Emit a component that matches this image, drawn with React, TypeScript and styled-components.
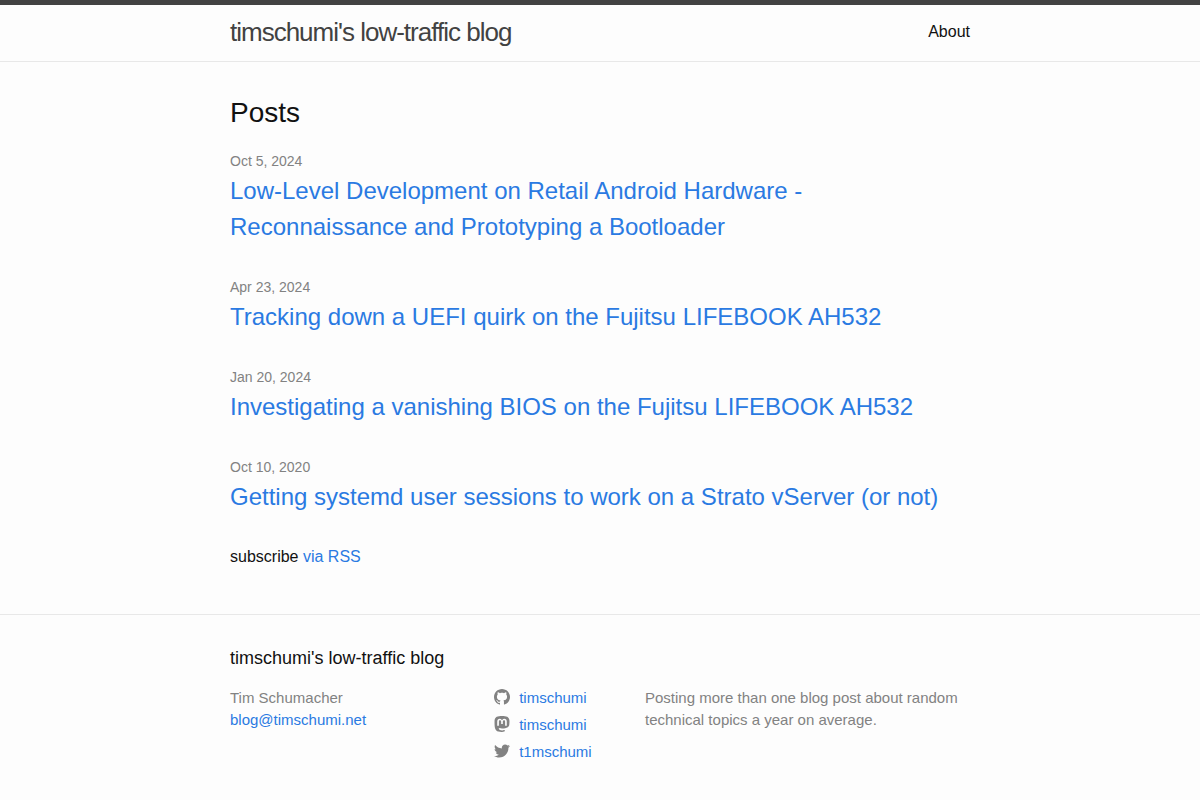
import React from "react";
import styled, { createGlobalStyle } from "styled-components";

const GlobalStyle = createGlobalStyle`
  * { box-sizing: border-box; }
  body {
    margin: 0;
    background: #fdfdfd;
    color: #111;
    font: 400 16px/24px "Liberation Sans", Arial, sans-serif;
  }
  h1, h2, h3, p, ul { margin: 0; padding: 0; font-weight: 400; }
  ul { list-style: none; }
`;

const Wrapper = styled.div`
  max-width: 800px;
  margin: 0 auto;
  padding: 0 30px;
`;

const Link = styled.a`
  color: #2a7ae2;
  text-decoration: none;
  &:hover { color: #111; text-decoration: underline; }
`;

const Header = styled.header`
  border-top: 5px solid #424242;
  border-bottom: 1px solid #e8e8e8;
`;

const HeaderRow = styled(Wrapper)`
  display: flex;
  justify-content: space-between;
  height: 56px;
  line-height: 54px;
`;

const SiteTitle = styled.a`
  color: #424242;
  font-size: 26px;
  letter-spacing: -1px;
  text-decoration: none;
`;

const NavLink = styled.a`
  color: #111;
  text-decoration: none;
`;

const Main = styled.main`
  padding: 30px 0;
`;

const ListHeading = styled.h2`
  margin-bottom: 15px;
  font-size: 28px;
  line-height: 42px;
`;

const Post = styled.li`
  margin-bottom: 30px;
`;

const PostDate = styled.time`
  display: block;
  color: #828282;
  font-size: 14px;
  line-height: 24px;
`;

const PostTitle = styled.h3`
  font-size: 24px;
  line-height: 36px;
`;

const Subscribe = styled.p`
  padding-bottom: 15px;
`;

const Footer = styled.footer`
  padding: 30px 0;
  border-top: 1px solid #e8e8e8;
`;

const FooterHeading = styled.h2`
  margin-bottom: 15px;
  font-size: 18px;
  line-height: 27px;
`;

const FooterColumns = styled.div`
  display: grid;
  grid-template-columns: 264px 151px 1fr;
  color: #828282;
  font-size: 15px;
  line-height: 22px;
`;

const SocialItem = styled.li`
  margin-bottom: 5px;
`;

const Icon = styled.svg`
  width: 16px;
  height: 16px;
  margin-right: 5px;
  vertical-align: text-top;
  fill: #828282;
`;

const posts = [
  { date: "Oct 5, 2024", title: "Low-Level Development on Retail Android Hardware - Reconnaissance and Prototyping a Bootloader" },
  { date: "Apr 23, 2024", title: "Tracking down a UEFI quirk on the Fujitsu LIFEBOOK AH532" },
  { date: "Jan 20, 2024", title: "Investigating a vanishing BIOS on the Fujitsu LIFEBOOK AH532" },
  { date: "Oct 10, 2020", title: "Getting systemd user sessions to work on a Strato vServer (or not)" },
];

const socials = [
  {
    name: "timschumi",
    viewBox: "0 0 16 16",
    path: "M8 0C3.58 0 0 3.582 0 8c0 3.535 2.292 6.533 5.47 7.59.4.075.547-.172.547-.385 0-.19-.007-.693-.01-1.36-2.226.483-2.695-1.073-2.695-1.073-.364-.924-.89-1.17-.89-1.17-.725-.496.056-.486.056-.486.803.056 1.225.824 1.225.824.714 1.223 1.873.87 2.33.665.072-.517.278-.87.507-1.07-1.777-.2-3.644-.888-3.644-3.953 0-.873.31-1.587.823-2.147-.09-.202-.36-1.015.07-2.117 0 0 .67-.215 2.2.82.64-.178 1.32-.266 2-.27.68.004 1.36.092 2 .27 1.52-1.035 2.19-.82 2.19-.82.43 1.102.16 1.915.08 2.117.51.56.82 1.274.82 2.147 0 3.073-1.87 3.75-3.65 3.947.28.24.54.73.54 1.48 0 1.07-.01 1.93-.01 2.19 0 .21.14.46.55.38C13.71 14.53 16 11.53 16 8c0-4.418-3.582-8-8-8",
  },
  {
    name: "timschumi",
    viewBox: "0 0 24 24",
    path: "M23.193 7.88c0-5.207-3.411-6.733-3.411-6.733C18.062.357 15.108.025 12.041 0h-.076c-3.069.025-6.02.357-7.74 1.147 0 0-3.412 1.526-3.412 6.732 0 1.193-.023 2.619.015 4.13.124 5.092.934 10.11 5.641 11.355 2.17.574 4.034.695 5.536.612 2.722-.15 4.25-.972 4.25-.972l-.09-1.975s-1.945.613-4.13.54c-2.165-.075-4.449-.234-4.799-2.892a5.5 5.5 0 0 1-.048-.745s2.125.52 4.818.643c1.646.075 3.19-.097 4.758-.283 3.007-.359 5.625-2.212 5.954-3.905.517-2.665.475-6.508.475-6.508zm-4.024 6.709h-2.497v-6.12c0-1.29-.543-1.944-1.628-1.944-1.2 0-1.802.776-1.802 2.313v3.349h-2.484v-3.35c0-1.537-.602-2.313-1.802-2.313-1.085 0-1.628.655-1.628 1.945v6.119H4.831V8.285c0-1.29.328-2.314.987-3.07.68-.759 1.57-1.147 2.674-1.147 1.278 0 2.246.491 2.886 1.474L12 6.585l.622-1.043c.64-.983 1.608-1.474 2.886-1.474 1.104 0 1.994.388 2.674 1.146.658.757.986 1.781.986 3.07v6.305z",
  },
  {
    name: "t1mschumi",
    viewBox: "0 0 16 16",
    path: "M16 3.038c-.59.26-1.22.437-1.885.517.677-.407 1.198-1.05 1.443-1.816-.634.37-1.337.64-2.085.79-.598-.64-1.45-1.04-2.396-1.04-1.812 0-3.282 1.47-3.282 3.28 0 .26.03.51.085.75-2.728-.13-5.147-1.44-6.766-3.42C.83 2.58.67 3.14.67 3.75c0 1.14.58 2.143 1.46 2.732-.538-.017-1.045-.165-1.487-.41v.04c0 1.59 1.13 2.918 2.633 3.22-.276.074-.566.114-.865.114-.21 0-.41-.02-.61-.058.42 1.304 1.63 2.253 3.07 2.28-1.12.88-2.54 1.404-4.07 1.404-.26 0-.52-.015-.78-.045 1.46.93 3.18 1.474 5.04 1.474 6.04 0 9.34-5 9.34-9.33 0-.14 0-.28-.01-.42.64-.46 1.2-1.04 1.64-1.7z",
  },
];

export default function App() {
  return (
    <>
      <GlobalStyle />
      <Header>
        <HeaderRow>
          <SiteTitle href="#">timschumi's low-traffic blog</SiteTitle>
          <nav><NavLink href="#about">About</NavLink></nav>
        </HeaderRow>
      </Header>
      <Main>
        <Wrapper>
          <ListHeading>Posts</ListHeading>
          <ul>
            {posts.map((post) => (
              <Post key={post.title}>
                <PostDate>{post.date}</PostDate>
                <PostTitle><Link href="#post">{post.title}</Link></PostTitle>
              </Post>
            ))}
          </ul>
          <Subscribe>subscribe <Link href="#feed">via RSS</Link></Subscribe>
        </Wrapper>
      </Main>
      <Footer>
        <Wrapper>
          <FooterHeading>timschumi's low-traffic blog</FooterHeading>
          <FooterColumns>
            <ul>
              <li>Tim Schumacher</li>
              <li><Link href="mailto:blog@timschumi.net">blog@timschumi.net</Link></li>
            </ul>
            <ul>
              {socials.map((social) => (
                <SocialItem key={social.path}>
                  <Icon viewBox={social.viewBox} aria-hidden="true"><path d={social.path} /></Icon>
                  {" "}
                  <Link href="#social">{social.name}</Link>
                </SocialItem>
              ))}
            </ul>
            <p>Posting more than one blog post about random technical topics a year on average.</p>
          </FooterColumns>
        </Wrapper>
      </Footer>
    </>
  );
}
